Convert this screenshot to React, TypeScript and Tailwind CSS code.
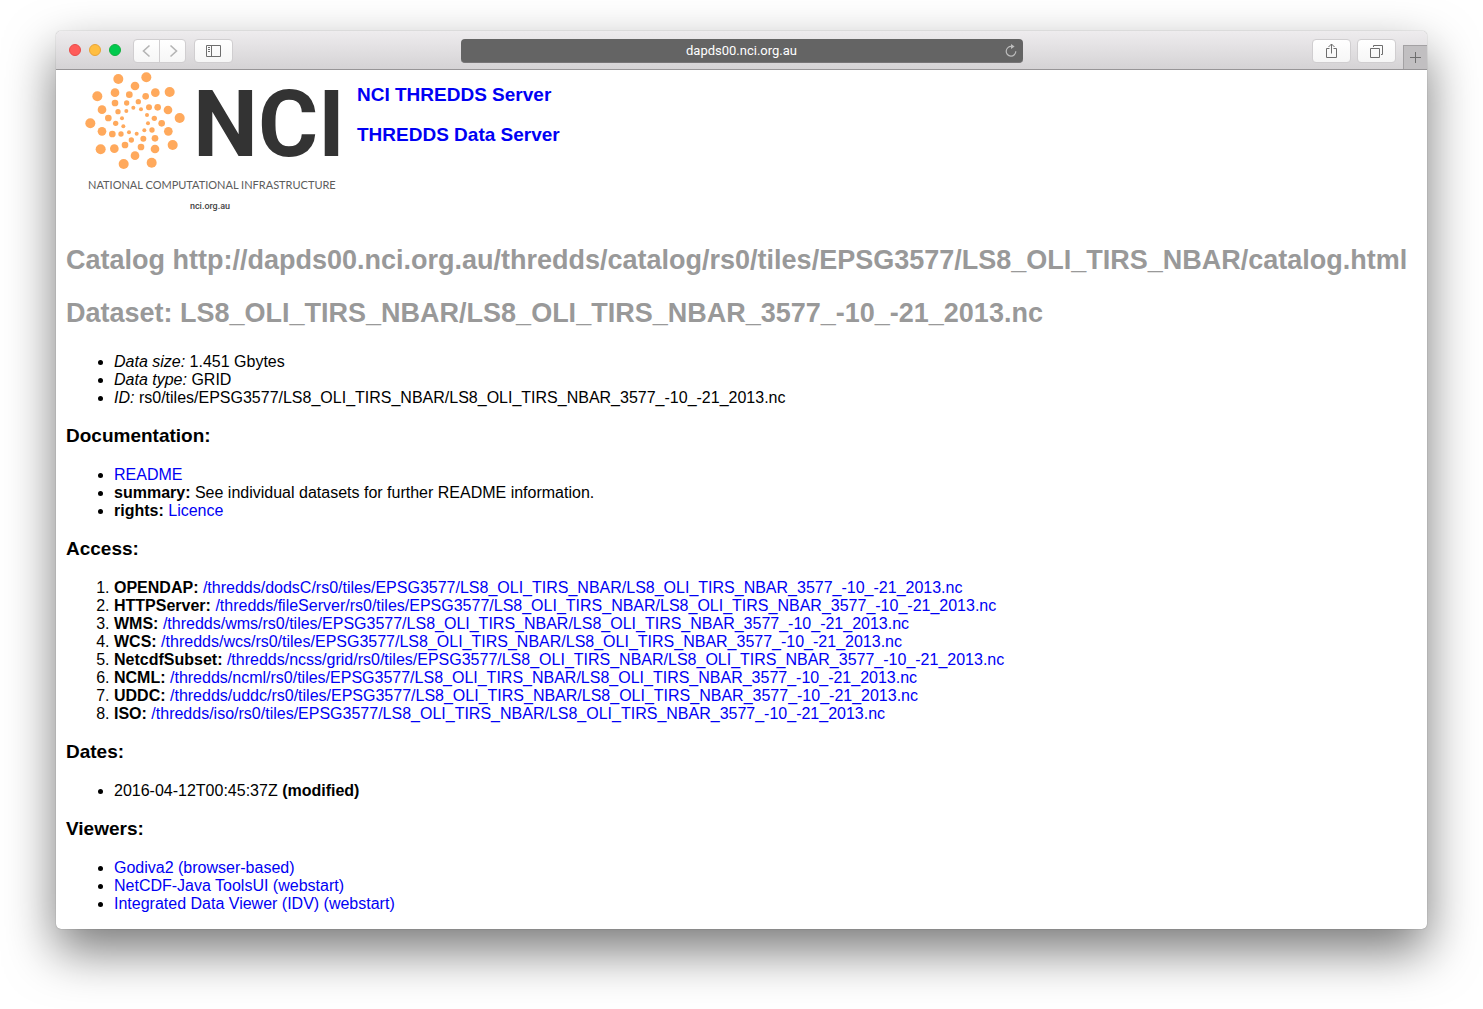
import React from 'react';

const DOTS: Array<[number, number, number]> = [
  [130, 42, 15], [214, 37, 15], [67, 94, 15], [284, 81, 15], [46, 175, 15], [314, 159, 15],
  [77, 253, 15], [293, 240, 15], [146, 297, 15], [230, 293, 15],
  [180, 63, 13], [120, 83, 13], [241, 83, 13], [81, 134, 13], [279, 135, 13], [81, 199, 13],
  [280, 199, 13], [118, 251, 13], [240, 252, 13], [180, 272, 13],
  [163, 89, 10], [212, 94, 10], [120, 114, 10], [248, 127, 10], [100, 159, 10], [260, 175, 10],
  [112, 207, 10], [240, 220, 10], [150, 240, 10], [198, 246, 10],
  [190, 110, 8], [155, 114, 8], [222, 127, 9], [129, 140, 8], [238, 160, 8], [122, 175, 8],
  [231, 195, 8], [138, 207, 8], [205, 221, 9], [169, 225, 8],
  [175, 128, 6], [198, 133, 6], [154, 138, 6], [216, 150, 6], [141, 160, 6], [219, 175, 6],
  [145, 184, 6], [208, 196, 6], [162, 202, 6], [185, 206, 6],
];

const FILE = 'LS8_OLI_TIRS_NBAR/LS8_OLI_TIRS_NBAR_3577_-10_-21_2013.nc';

const ACCESS: Array<[string, string]> = [
  ['OPENDAP', 'dodsC'],
  ['HTTPServer', 'fileServer'],
  ['WMS', 'wms'],
  ['WCS', 'wcs'],
  ['NetcdfSubset', 'ncss/grid'],
  ['NCML', 'ncml'],
  ['UDDC', 'uddc'],
  ['ISO', 'iso'],
];

const VIEWERS = [
  'Godiva2 (browser-based)',
  'NetCDF-Java ToolsUI (webstart)',
  'Integrated Data Viewer (IDV) (webstart)',
];

function Logo() {
  return (
    <svg width="282" height="152" viewBox="0 0 282 152" role="img" aria-label="NCI" className="shrink-0">
      <g transform="translate(9 -5) scale(0.33333)" fill="#ffa95c">
        {DOTS.map(([x, y, r]) => (
          <circle key={`${x}-${y}`} cx={x} cy={y} r={r} />
        ))}
      </g>
      <text x="127" y="86" fontFamily="Roboto, sans-serif" fontWeight="700" fontSize="92" fill="#333333">NCI</text>
      <text x="22" y="119" fontFamily="Lato, sans-serif" fontSize="11" fill="#5c5c5c">
        NATIONAL COMPUTATIONAL INFRASTRUCTURE
      </text>
      <text x="144" y="139" textAnchor="middle" fontFamily="Roboto, sans-serif" fontWeight="500" fontSize="9" fill="#444444">
        nci.org.au
      </text>
    </svg>
  );
}

function ToolButton({ label, className, children }: { label: string; className: string; children: React.ReactNode }) {
  return (
    <button
      type="button"
      aria-label={label}
      className={`flex h-6 items-center justify-center border border-[#d0ced0] bg-gradient-to-b from-white to-[#f6f6f6] ${className}`}
    >
      {children}
    </button>
  );
}

function Toolbar() {
  return (
    <header className="grid h-[39px] grid-cols-[1fr_562px_1fr] rounded-t-[5px] border-b border-[#979597] bg-gradient-to-b from-[#eeecee] to-[#d5d3d5] pt-0.5">
      <div className="flex items-center pl-[13px]">
        <div className="mb-0.5 flex gap-2">
          <button type="button" aria-label="Close" className="size-3 rounded-full border border-[#e94b48] bg-[#ff5c5a]" />
          <button type="button" aria-label="Minimise" className="size-3 rounded-full border border-[#e9a436] bg-[#ffbe41]" />
          <button type="button" aria-label="Zoom" className="size-3 rounded-full border border-[#12b040] bg-[#00ca4e]" />
        </div>
        <div className="ml-3 flex">
          <ToolButton label="Back" className="w-[27px] rounded-l">
            <svg width="10" height="14" viewBox="0 0 10 14" fill="none" stroke="#b4b4b4" strokeWidth="1.6"><path d="M7.500 1.500 1.500 7l6 5.500" /></svg>
          </ToolButton>
          <ToolButton label="Forward" className="-ml-px w-[27px] rounded-r">
            <svg width="10" height="14" viewBox="0 0 10 14" fill="none" stroke="#b4b4b4" strokeWidth="1.6"><path d="M2.500 1.500 8.500 7l-6 5.500" /></svg>
          </ToolButton>
        </div>
        <ToolButton label="Show sidebar" className="ml-2 w-[39px] rounded">
          <svg width="15" height="12" viewBox="0 0 15 12" fill="none" stroke="#6e6e6e"><path d="M.5.5h14v11H.5zM5.500.5v11M2 2.500h2M2 4.500h2M2 6.500h2" /></svg>
        </ToolButton>
      </div>
      <div className="relative flex items-center">
        <input
          type="text"
          aria-label="Address"
          defaultValue="dapds00.nci.org.au"
          className="h-6 w-full rounded border-b border-[#777577] bg-[#646464] text-center font-[Roboto,sans-serif] text-[13px] text-white"
        />
        <button type="button" aria-label="Reload" className="absolute right-1.5">
          <svg width="12" height="14" viewBox="0 0 12 14" fill="none" stroke="#bdbdbd" strokeWidth="1.2">
            <path d="M6.500 2.500A4.800 4.800 0 1 0 10.800 7.300" />
            <path d="M6 0v5l3.600-2.500z" fill="#bdbdbd" stroke="none" />
          </svg>
        </button>
      </div>
      <div className="flex items-center justify-end">
        <ToolButton label="Share" className="w-[39px] rounded">
          <svg width="13" height="16" viewBox="0 0 13 16" fill="none" stroke="#6e6e6e"><path d="M4.500 5.500h-3v9h10v-9h-3M6.500 10.500V1M3.500 4l3-3 3 3" /></svg>
        </ToolButton>
        <ToolButton label="Show all tabs" className="ml-1.5 w-[39px] rounded">
          <svg width="13" height="13" viewBox="0 0 13 13" fill="none" stroke="#6e6e6e"><path d="M.5 3.500h9v9h-9zM3.500 2V.5h9v9H11" /></svg>
        </ToolButton>
        <button
          type="button"
          aria-label="New tab"
          className="ml-[7px] flex h-6 w-6 items-center justify-center self-end border-t border-l border-[#a3a1a3] bg-[#c1bfc1]"
        >
          <svg width="11" height="11" viewBox="0 0 11 11" stroke="#6e6e6e"><path d="M5.500 0v11M0 5.500h11" /></svg>
        </button>
      </div>
    </header>
  );
}

function Heading({ children }: { children: React.ReactNode }) {
  return <h3 className="mt-[17px] mb-[19px] text-[19px] leading-[23px] font-bold">{children}</h3>;
}

function Link({ children }: { children: React.ReactNode }) {
  return <a href="#" className="text-[#0000f4]">{children}</a>;
}

export default function App() {
  return (
    <div className="min-h-screen bg-white px-14 pt-[31px] pb-20 font-['Liberation_Sans',Arial,sans-serif] text-base leading-[18px] text-black">
      <div className="rounded-[5px] bg-white shadow-[0_0_1px_rgba(0,0,0,0.5),0_22px_50px_rgba(0,0,0,0.53)]">
        <Toolbar />
        <main className="px-2.5 pb-4">
          <div className="flex gap-[9px]">
            <Logo />
            <div className="flex flex-col gap-[18px] pt-3.5 text-[19px] leading-[22px] font-bold">
              <Link>NCI THREDDS Server</Link>
              <Link>THREDDS Data Server</Link>
            </div>
          </div>
          <h1 className="mt-[22px] text-[27px] leading-8 font-bold whitespace-nowrap text-[#999999]">
            Catalog http://dapds00.nci.org.au/thredds/catalog/rs0/tiles/EPSG3577/LS8_OLI_TIRS_NBAR/catalog.html
          </h1>
          <h2 className="mt-[21px] mb-6 text-[27px] leading-8 font-bold whitespace-nowrap text-[#999999]">
            Dataset: LS8_OLI_TIRS_NBAR/LS8_OLI_TIRS_NBAR_3577_-10_-21_2013.nc
          </h2>
          <ul className="list-disc pl-12">
            <li><em>Data size:</em> 1.451 Gbytes</li>
            <li><em>Data type:</em> GRID</li>
            <li><em>ID:</em> rs0/tiles/EPSG3577/{FILE}</li>
          </ul>
          <Heading>Documentation:</Heading>
          <ul className="list-disc pl-12">
            <li><Link>README</Link></li>
            <li><b>summary:</b> See individual datasets for further README information.</li>
            <li><b>rights:</b> <Link>Licence</Link></li>
          </ul>
          <Heading>Access:</Heading>
          <ol className="list-decimal pl-12">
            {ACCESS.map(([name, path]) => (
              <li key={name}>
                <b>{name}:</b> <Link>/thredds/{path}/rs0/tiles/EPSG3577/{FILE}</Link>
              </li>
            ))}
          </ol>
          <Heading>Dates:</Heading>
          <ul className="list-disc pl-12">
            <li>2016-04-12T00:45:37Z <b>(modified)</b></li>
          </ul>
          <Heading>Viewers:</Heading>
          <ul className="list-disc pl-12">
            {VIEWERS.map((v) => (
              <li key={v}><Link>{v}</Link></li>
            ))}
          </ul>
        </main>
      </div>
    </div>
  );
}
